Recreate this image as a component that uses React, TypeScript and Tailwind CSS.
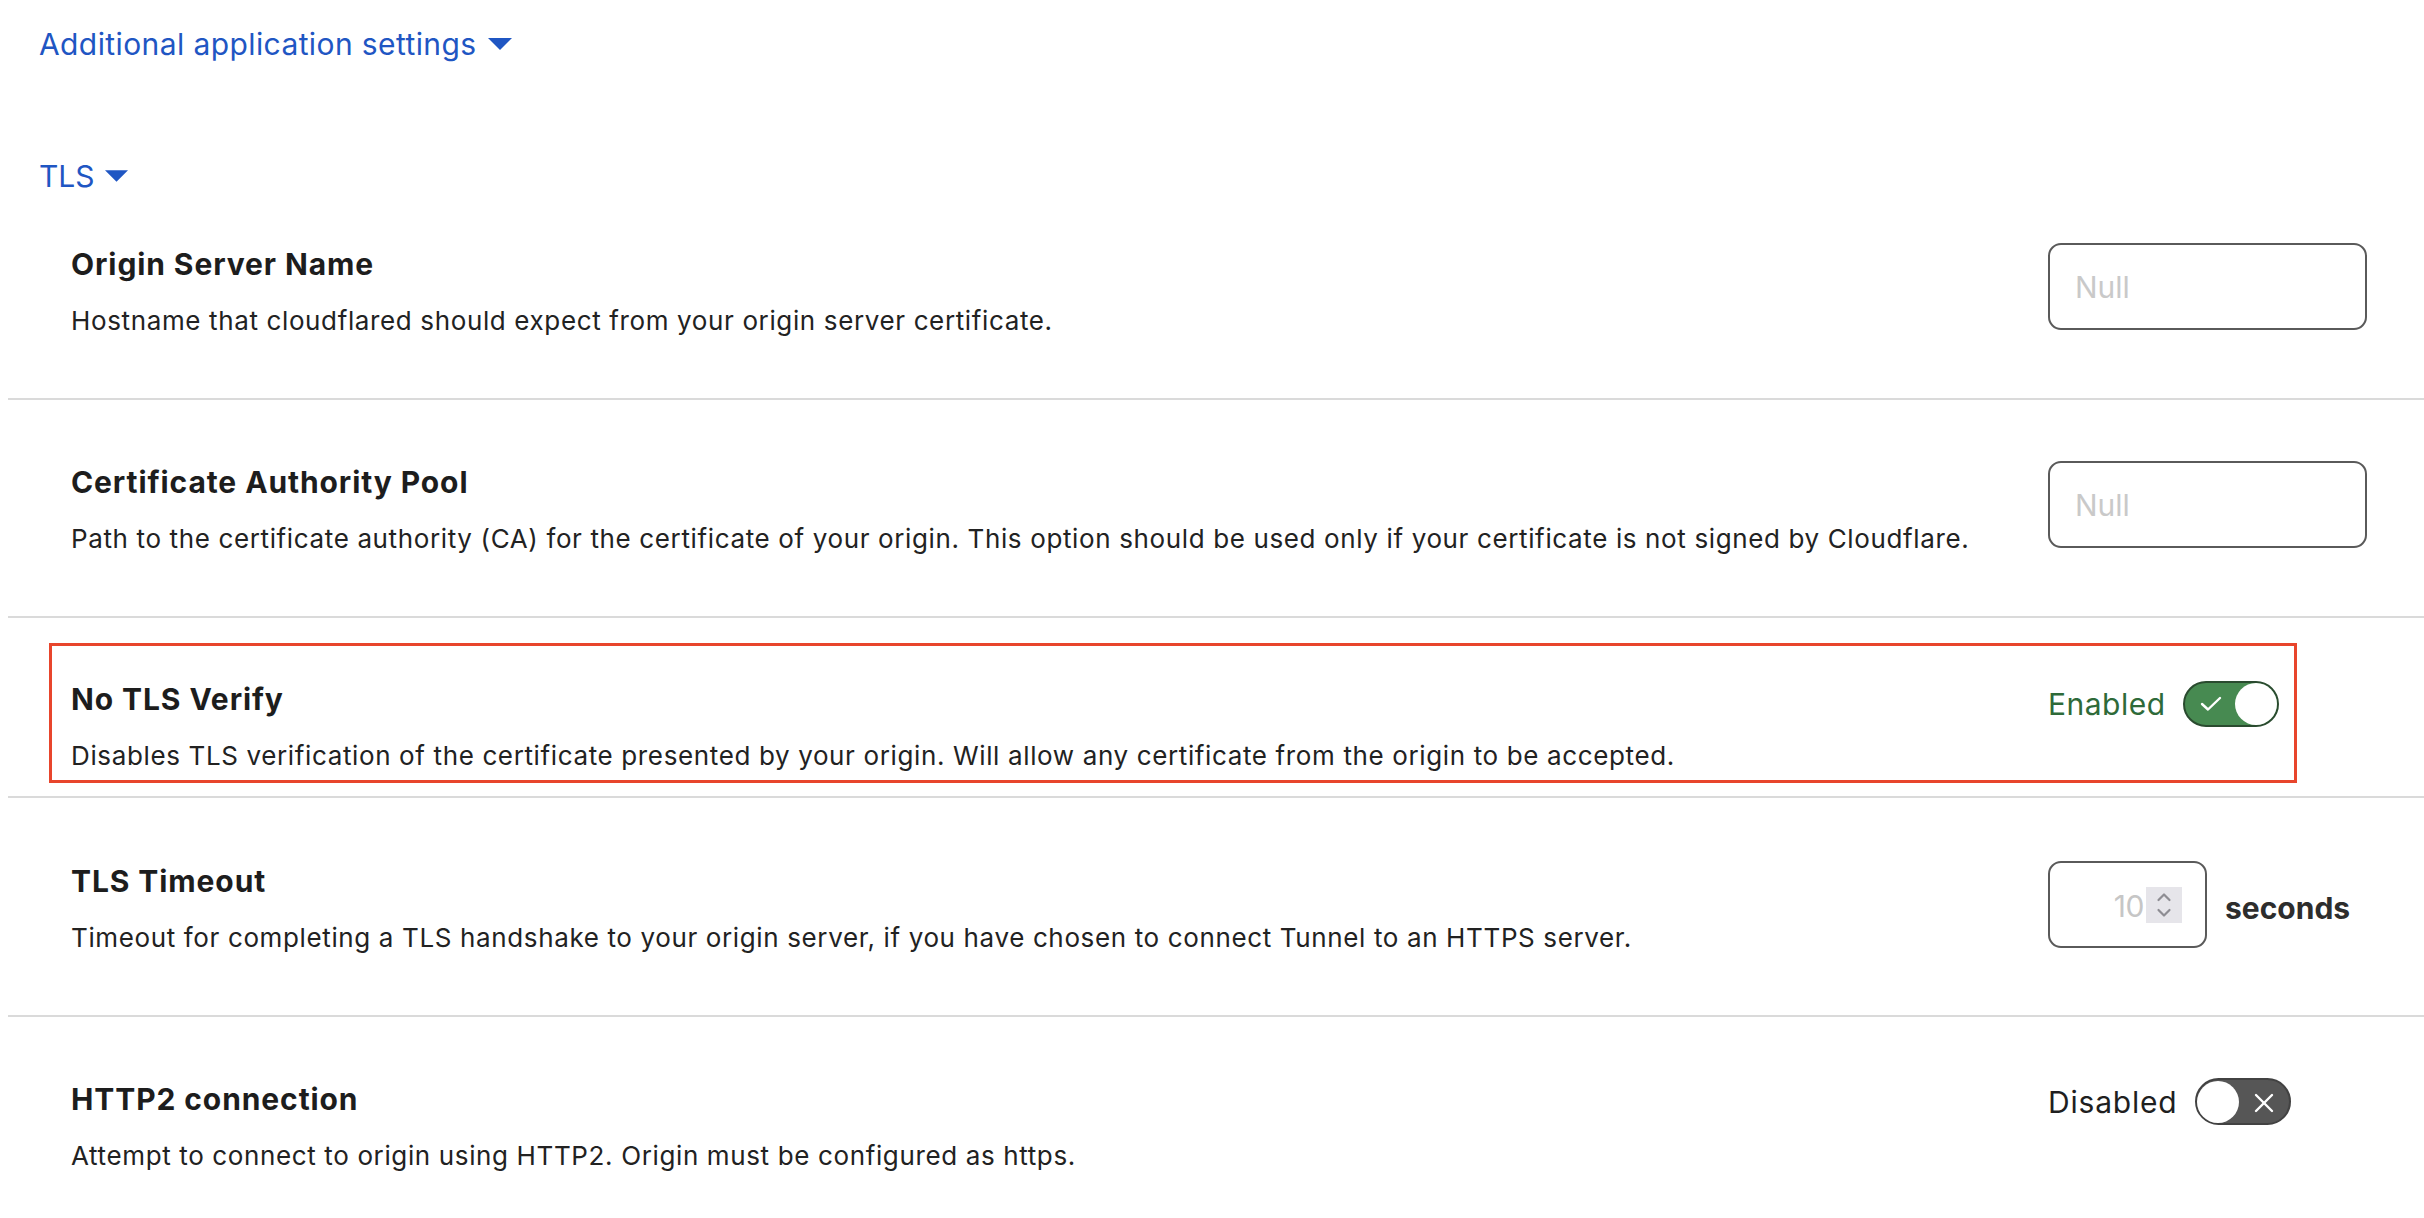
import React from "react";

function Caret({ w, h }: { w: number; h: number }) {
  return (
    <svg width={w} height={h} viewBox="0 0 24 12" className="shrink-0">
      <path d="M0 0 L24 0 L12 12 Z" fill="#1f56c3" />
    </svg>
  );
}

function TextInput() {
  return (
    <div className="w-[319px] h-[87px] border-2 border-[#5a5a5a] rounded-[13px] flex items-center pl-[25px]">
      <span className="text-[30px] leading-none text-[#c9c9c9]">Null</span>
    </div>
  );
}

function NumberInput() {
  return (
    <div className="flex items-center">
      <div className="w-[159px] h-[87px] border-2 border-[#5a5a5a] rounded-[13px] flex items-center justify-end pr-[23px]">
        <span className="text-[30px] leading-none text-[#c6c6c6] tracking-[-0.5px] pt-[2px]">10</span>
        <div className="ml-[2px] w-[36px] h-[36px] bg-[#e6e5ea] flex items-center justify-center">
          <svg width="16" height="26" viewBox="0 0 16 26" fill="none" stroke="#8e8d93" strokeWidth="2.2" strokeLinecap="round" strokeLinejoin="round">
            <path d="M2.5 8 L8 2.5 L13.5 8" />
            <path d="M2.5 18 L8 23.5 L13.5 18" />
          </svg>
        </div>
      </div>
      <span className="ml-[18px] text-[30px] font-bold text-[#2d2d2d] leading-none pt-[6px]">seconds</span>
    </div>
  );
}

function ToggleOn() {
  return (
    <div className="flex items-center">
      <span className="text-[30px] leading-none text-[#2e6a39] tracking-[0.5px]">Enabled</span>
      <div className="ml-[17px] relative w-[96px] h-[46px] rounded-full bg-[#478a51] border-2 border-[#2a4b2f]">
        <svg className="absolute left-[15px] top-[13px]" width="22" height="16" viewBox="0 0 22 16" fill="none" stroke="#ffffff" strokeWidth="2.4" strokeLinecap="round" strokeLinejoin="round">
          <path d="M2 8 L8 13.5 L20 2" />
        </svg>
        <div className="absolute right-[0px] top-[0px] w-[42px] h-[42px] rounded-full bg-white" />
      </div>
    </div>
  );
}

function ToggleOff() {
  return (
    <div className="flex items-center">
      <span className="text-[30px] leading-none text-[#1f1f1f] tracking-[0.8px]">Disabled</span>
      <div className="ml-[17px] relative w-[96px] h-[47px] rounded-full bg-[#565656] border-2 border-[#424242]">
        <div className="absolute left-[0px] top-[1px] w-[42px] h-[42px] rounded-full bg-white" />
        <svg className="absolute left-[57px] top-[13px]" width="20" height="20" viewBox="0 0 20 20" fill="none" stroke="#ffffff" strokeWidth="2.4" strokeLinecap="round">
          <path d="M2 2 L18 18" />
          <path d="M18 2 L2 18" />
        </svg>
      </div>
    </div>
  );
}

function Row({
  title,
  desc,
  right,
  pt,
  pb,
  border,
  rightOffset,
  children,
}: {
  title: string;
  desc: string;
  right: React.ReactNode;
  pt: string;
  pb: string;
  border: boolean;
  rightOffset: string;
  children?: React.ReactNode;
}) {
  return (
    <div className={`relative flex items-start ${pt} ${pb} ${border ? "border-b-2 border-[#dadada]" : ""}`}>
      {children}
      <div className="flex-1 pl-[63px]">
        <div className="text-[30px] leading-[36px] font-bold tracking-[0.9px] text-[#1d1d1d]">{title}</div>
        <div className="mt-[23px] text-[26px] leading-[32px] tracking-[0.63px] text-[#222222]">{desc}</div>
      </div>
      <div className={`w-[376px] shrink-0 ${rightOffset}`}>{right}</div>
    </div>
  );
}

export default function App() {
  return (
    <div className="w-[2424px] h-[1218px] overflow-hidden bg-white pl-[8px] font-['Inter','Noto_Sans',sans-serif]">
      <div className="pl-[31px] pt-[26px] flex items-center h-[62px] box-border">
        <div className="flex items-center gap-[11px] h-[36px]">
          <span className="text-[30px] leading-[36px] text-[#1f56c3] tracking-[0.4px]">Additional application settings</span>
          <Caret w={24} h={12} />
        </div>
      </div>
      <div className="pl-[31px] mt-[96px] flex items-center gap-[10px] h-[36px]">
        <span className="text-[30px] leading-[36px] text-[#1f56c3]">TLS</span>
        <Caret w={23} h={12} />
      </div>

      <Row
        title="Origin Server Name"
        desc="Hostname that cloudflared should expect from your origin server certificate."
        right={<TextInput />}
        pt="pt-[52px]"
        pb="pb-[61px]"
        border
        rightOffset="-mt-[3px]"
      />
      <Row
        title="Certificate Authority Pool"
        desc="Path to the certificate authority (CA) for the certificate of your origin. This option should be used only if your certificate is not signed by Cloudflare."
        right={<TextInput />}
        pt="pt-[64px]"
        pb="pb-[61px]"
        border
        rightOffset="-mt-[3px]"
      />
      <Row
        title="No TLS Verify"
        desc="Disables TLS verification of the certificate presented by your origin. Will allow any certificate from the origin to be accepted."
        right={<ToggleOn />}
        pt="pt-[63px]"
        pb="pb-[24px]"
        border
        rightOffset="mt-[0px]"
      >
        <div className="absolute left-[41px] right-[127px] top-[25px] bottom-[13px] border-[3px] border-[#e8452c] pointer-events-none" />
      </Row>
      <Row
        title="TLS Timeout"
        desc="Timeout for completing a TLS handshake to your origin server, if you have chosen to connect Tunnel to an HTTPS server."
        right={<NumberInput />}
        pt="pt-[65px]"
        pb="pb-[61px]"
        border
        rightOffset="-mt-[2px]"
      />
      <Row
        title="HTTP2 connection"
        desc="Attempt to connect to origin using HTTP2. Origin must be configured as https."
        right={<ToggleOff />}
        pt="pt-[64px]"
        pb="pb-[40px]"
        border={false}
        rightOffset="-mt-[3px]"
      />
    </div>
  );
}
